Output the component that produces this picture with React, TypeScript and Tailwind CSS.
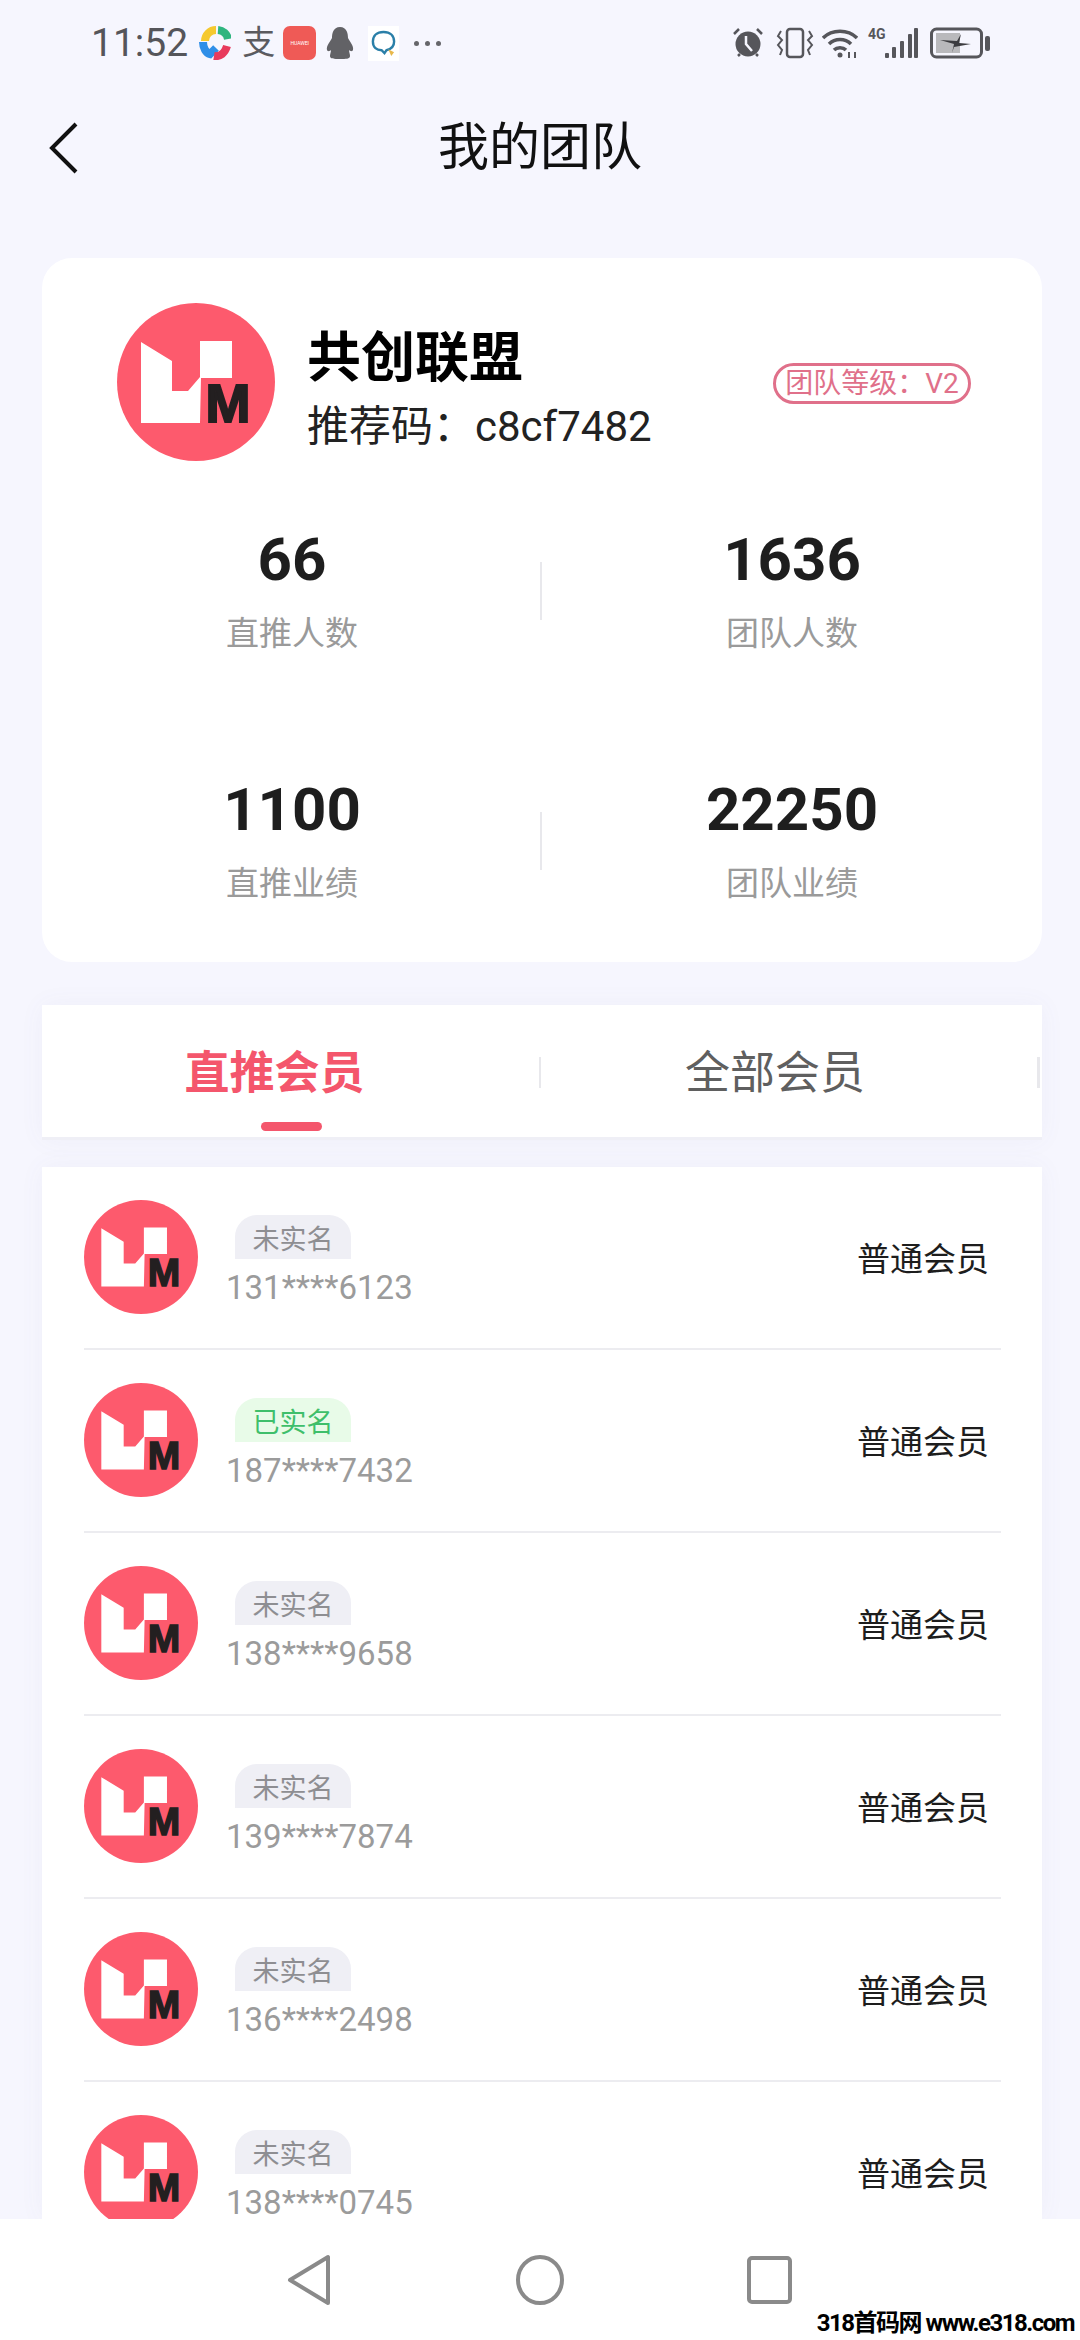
const members = [
  { phone: '131****6123', verified: false },
  { phone: '187****7432', verified: true },
  { phone: '138****9658', verified: false },
  { phone: '139****7874', verified: false },
  { phone: '136****2498', verified: false },
  { phone: '138****0745', verified: false },
]

const stats = [
  { value: '66', label: '直推人数' },
  { value: '1636', label: '团队人数' },
  { value: '1100', label: '直推业绩' },
  { value: '22250', label: '团队业绩' },
]

function Logo({ className }: { className: string }) {
  return (
    <svg viewBox="0 0 158 158" className={className}>
      <circle cx="79" cy="79" r="79" fill="#fd5a6d" />
      <path
        d="M24 39L55 58V88H71L83 74V38H115V75H84L83 120H24Z"
        fill="#fff"
      />
      <text
        x="111"
        y="119"
        textAnchor="middle"
        fontSize="54"
        fontWeight="700"
        fontFamily="Liberation Sans, sans-serif"
        fill="#231f20"
        stroke="#231f20"
        strokeWidth="2"
      >
        M
      </text>
    </svg>
  )
}

function LeftStatusIcons() {
  return (
    <div className="flex items-center">
      <svg viewBox="0 0 32 34" className="ml-[11px] w-[32px] h-[34px]" fill="none" strokeWidth="8">
        <path d="M6 15A11 11 0 0 1 17 4" stroke="#f5c92f" />
        <path d="M19 4A11 11 0 0 1 29 13" stroke="#2fb57f" />
        <path d="M4 16C4 22 7 27 11 28L17 22" stroke="#2f8fe8" />
        <path d="M15 30C21 31 26 27 28 20" stroke="#e83a5c" />
      </svg>
      <span className="ml-[11px] w-[32px] text-[33px] leading-[34px] text-[#5b5b60]">支</span>
      <div className="ml-[9px] w-[33px] h-[34px] rounded-[7px] bg-[#ef5a56] flex items-center justify-center">
        <span className="text-[5px] leading-none text-white">HUAWEI</span>
      </div>
      <svg viewBox="0 0 28 34" className="ml-[10px] w-[28px] h-[34px]" fill="#626266">
        <path d="M14 1C21 1 22 8 22 12C24 16 28 20 27 24C26 26 24 25 23 24C23 26 24 28 24 30C24 33 20 33 14 33C8 33 4 33 4 30C4 28 5 26 5 24C4 25 2 26 1 24C0 20 4 16 6 12C6 8 7 1 14 1Z" />
      </svg>
      <div className="ml-[14px] w-[31px] h-[35px] bg-white flex items-center justify-center">
        <svg viewBox="0 0 28 30" className="w-[27px] h-[29px]" fill="none">
          <path
            d="M14 3C7 3 3 7 3 13C3 19 7 22 12 22L15 25L17 22C22 21 25 18 25 13C25 7 21 3 14 3Z"
            stroke="#2a7fa8"
            strokeWidth="2.5"
          />
          <path d="M19 21L25 24L22 28Z" fill="#e8b84a" />
        </svg>
      </div>
      <div className="ml-[15px] flex gap-[6px]">
        <span className="w-[5px] h-[5px] rounded-full bg-[#66666a]" />
        <span className="w-[5px] h-[5px] rounded-full bg-[#66666a]" />
        <span className="w-[5px] h-[5px] rounded-full bg-[#66666a]" />
      </div>
    </div>
  )
}

function RightStatusIcons() {
  return (
    <div className="flex items-center">
      <svg viewBox="0 0 32 32" className="w-[32px] h-[32px]" fill="none">
        <circle cx="16" cy="17" r="12.5" fill="#56565b" />
        <path d="M14 9V17L20 24" stroke="#f6f6fe" strokeWidth="2.5" />
        <path d="M2 7L7 2M30 7L25 2M6 29L8 27M26 29L24 27" stroke="#56565b" strokeWidth="2.5" />
      </svg>
      <svg viewBox="0 0 38 32" className="ml-[12px] w-[38px] h-[32px]" fill="none" stroke="#56565b" strokeWidth="2.5">
        <rect x="11" y="2" width="16" height="28" rx="3" />
        <path d="M5 4L2 9L6 13L2 18L6 23L4 28M33 4L36 9L32 13L36 18L32 23L34 28" strokeWidth="2" />
      </svg>
      <svg viewBox="0 0 36 32" className="ml-[8px] w-[36px] h-[32px]" fill="none" stroke="#56565b" strokeWidth="3.5">
        <path d="M1 11C10 2 26 2 35 11" />
        <path d="M7 17C13 11 23 11 29 17" />
        <path d="M12 23C15 20 21 20 24 23" />
        <circle cx="18" cy="28" r="2.5" fill="#56565b" stroke="none" />
        <path d="M27 31V25M33 25V31" strokeWidth="2" />
      </svg>
      <div className="ml-[10px] relative w-[50px] h-[32px]">
        <span className="absolute left-0 top-[-1px] text-[14px] leading-[16px] font-bold text-[#56565b]">4G</span>
        <svg viewBox="0 0 33 32" className="absolute right-0 top-0 w-[33px] h-[32px]" fill="#56565b">
          <rect x="0" y="26" width="4" height="5" rx="1" />
          <rect x="7" y="20" width="4" height="11" rx="1" />
          <rect x="15" y="14" width="4" height="17" rx="1" />
          <rect x="23" y="7" width="4" height="24" rx="1" />
          <rect x="29" y="1" width="4" height="30" rx="1" />
        </svg>
      </div>
      <svg viewBox="0 0 60 32" className="ml-[12px] w-[60px] h-[32px]" fill="none">
        <rect x="1.5" y="2" width="50" height="28" rx="5" stroke="#56565b" strokeWidth="3" />
        <rect x="6" y="6" width="24" height="20" fill="#b9b9bc" />
        <path d="M10 13L27 14L31 7L29 16L41 17L24 20L22 26L24 17Z" fill="#3c3c40" />
        <rect x="55" y="9" width="5" height="15" rx="2" fill="#56565b" />
      </svg>
    </div>
  )
}

function StatCell({ value, label, divider }: { value: string; label: string; divider: boolean }) {
  return (
    <div className="relative h-[250px] flex flex-col items-center">
      <span className="text-[60px] leading-[70px] font-bold text-[#1e1e1e]">{value}</span>
      <span className="mt-[19px] text-[33px] leading-[40px] text-[#9a9a9a]">{label}</span>
      {divider && <span className="absolute right-0 top-[37px] w-[2px] h-[58px] bg-[#e8e8ec]" />}
    </div>
  )
}

function MemberRow({ phone, verified, last }: { phone: string; verified: boolean; last: boolean }) {
  return (
    <div className={`h-[183px] ml-[42px] mr-[41px] flex items-start ${last ? '' : 'border-b-2 border-[#ececf0]'}`}>
      <Logo className="mt-[33px] w-[114px] h-[114px] shrink-0" />
      <div className="ml-[29px] mt-[48px] flex flex-col items-start">
        <span
          className={`ml-[8px] w-[116px] h-[44px] rounded-t-[22px] text-center text-[27px] leading-[50px] ${
            verified ? 'bg-[#e8fbe8] text-[#3fbf6b]' : 'bg-[#efeff5] text-[#8e8e92]'
          }`}
        >
          {verified ? '已实名' : '未实名'}
        </span>
        <span className="-ml-[1px] mt-[9px] text-[33px] leading-[40px] text-[#9b9b9b]">{phone}</span>
      </div>
      <span className="ml-auto mr-[12px] mt-[73px] text-[33px] leading-[40px] text-[#1d1d1d]">普通会员</span>
    </div>
  )
}

export default function App() {
  return (
    <div className="relative w-[1080px] h-[2340px] overflow-hidden flex flex-col bg-[#f6f6fe] font-['Roboto','Noto_Sans_CJK_SC',sans-serif]">
      <div className="h-[82px] pt-[4px] pl-[91px] pr-[90px] flex items-center justify-between">
        <div className="flex items-center">
          <span className="text-[39px] leading-[44px] text-[#55555a]">11:52</span>
          <LeftStatusIcons />
        </div>
        <RightStatusIcons />
      </div>

      <div className="relative h-[130px] flex items-center justify-center">
        <svg viewBox="0 0 30 52" className="absolute left-[48px] top-[40px] w-[30px] h-[52px]" fill="none" stroke="#111" strokeWidth="4">
          <path d="M28 2L4 26L28 50" />
        </svg>
        <h1 className="text-[51px] leading-[60px] text-[#111] mt-[1px]">我的团队</h1>
      </div>

      <div className="mt-[46px] ml-[42px] mr-[38px] h-[704px] shrink-0 rounded-[30px] bg-white overflow-hidden">
        <div className="relative pl-[75px] pt-[45px] h-[267px] flex items-start">
          <Logo className="w-[158px] h-[158px] shrink-0" />
          <div className="ml-[32px] pt-[25px]">
            <div className="text-[54px] leading-[62px] font-bold text-black">共创联盟</div>
            <div className="mt-[12px] text-[42px] leading-[50px] text-[#222]">推荐码：c8cf7482</div>
          </div>
          <span className="absolute right-[71px] top-[105px] w-[198px] h-[41px] rounded-full border-[3px] border-[#e0708a] text-center text-[28px] leading-[35px] text-[#e0708a]">
            团队等级：V2
          </span>
        </div>
        <div className="grid grid-cols-2">
          {stats.map((s, i) => (
            <StatCell key={s.label} value={s.value} label={s.label} divider={i % 2 === 0} />
          ))}
        </div>
      </div>

      <div className="mt-[43px] ml-[42px] mr-[38px] h-[135px] shrink-0 bg-white shadow-[0_0_24px_rgba(90,90,160,0.05)] border-b-[3px] border-[#efeff6] flex">
        <div className="relative w-[499px] flex justify-center">
          <span className="mr-[34px] mt-[44px] text-[45px] leading-[50px] font-bold text-[#f4566c]">直推会员</span>
          <span className="absolute left-[219px] top-[117px] w-[61px] h-[9px] rounded-full bg-[#f4566c]" />
          <span className="absolute right-0 top-[52px] w-[2px] h-[31px] bg-[#e8e8ec]" />
        </div>
        <div className="relative flex-1 flex justify-center">
          <span className="mr-[33px] mt-[44px] text-[45px] leading-[50px] text-[#5f5f5f]">全部会员</span>
          <span className="absolute right-[2px] top-[52px] w-[3px] h-[31px] bg-[#e8e8ec]" />
        </div>
      </div>

      <div className="mt-[27px] ml-[42px] mr-[38px] flex-1 min-h-0 overflow-hidden bg-white shadow-[0_0_24px_rgba(90,90,160,0.05)]">
        {members.map((m, i) => (
          <MemberRow key={m.phone} phone={m.phone} verified={m.verified} last={i === members.length - 1} />
        ))}
      </div>

      <div className="relative z-10 h-[121px] shrink-0 bg-white">
        <svg viewBox="0 0 1080 121" className="absolute inset-0 w-[1080px] h-[121px]" fill="none" stroke="#8a8a8a" strokeWidth="4" strokeLinejoin="round">
          <path d="M328 38V84L290 61Z" />
          <ellipse cx="540" cy="61" rx="22" ry="23" />
          <rect x="749" y="39" width="41" height="44" rx="3" />
        </svg>
        <span className="absolute right-[6px] bottom-[4px] text-[24px] leading-[26px] font-bold tracking-[-1.5px] text-black">
          318首码网 www.e318.com
        </span>
      </div>
    </div>
  )
}
